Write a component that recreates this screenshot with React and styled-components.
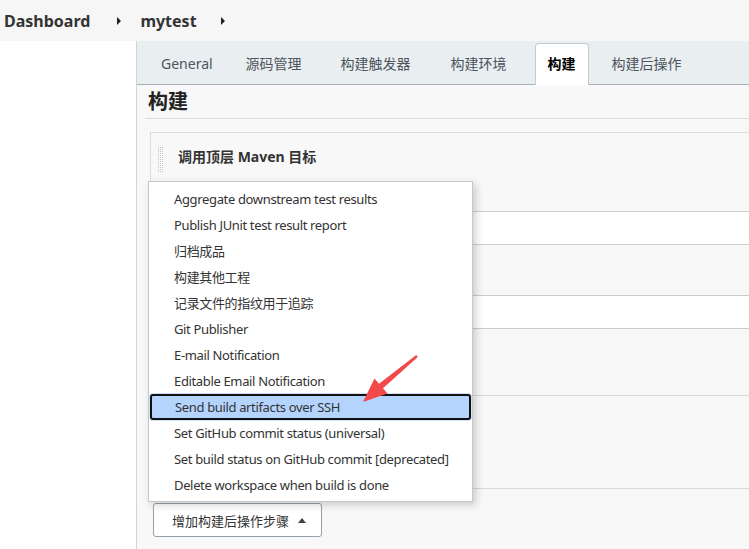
import React from 'react';
import styled, { createGlobalStyle, css } from 'styled-components';

const GlobalStyle = createGlobalStyle`
  html, body {
    margin: 0;
    padding: 0;
    background: #fff;
    font-family: "Noto Sans", "Noto Sans CJK SC", sans-serif;
    color: #333;
  }
`;

const Page = styled.div`
  position: relative;
  width: 749px;
  height: 549px;
  overflow: hidden;
  display: flex;
  flex-direction: column;
`;

const TopBar = styled.div`
  height: 41px;
  flex: none;
  background: #f6f6f6;
  display: flex;
  align-items: center;
  padding-left: 4px;
`;

const Crumb = styled.div`
  font-size: 16px;
  font-weight: bold;
  color: #333;
`;

const CrumbArrow = styled.span`
  width: 0;
  height: 0;
  border-top: 4px solid transparent;
  border-bottom: 4px solid transparent;
  border-left: 4px solid #222;
  margin: 0 19px 0 ${(props) => props.before}px;
`;

const Body = styled.div`
  flex: 1;
  display: flex;
  min-height: 0;
`;

const Sidebar = styled.div`
  width: 136px;
  flex: none;
  background: #fff;
`;

const Main = styled.div`
  flex: 1;
  position: relative;
  background: #f8f8f8;
  border-left: 1px solid #d4d4d4;
  display: flex;
  flex-direction: column;
`;

const TabBar = styled.div`
  height: 44px;
  flex: none;
  background: #e9eef1;
  border-bottom: 1px solid #a7b0b7;
  display: flex;
  align-items: flex-end;
  padding-left: 11px;
  box-sizing: border-box;
`;

const Tab = styled.div`
  height: 42px;
  box-sizing: border-box;
  padding: 0 12px 3px;
  margin-right: ${(props) => props.gap}px;
  display: flex;
  align-items: center;
  font-size: 14px;
  color: #4d545d;
  margin-bottom: -1px;
  border: 1px solid transparent;
  border-bottom: none;
  ${(props) =>
    props.active &&
    css`
      background: #fff;
      border-color: #c3c9ce;
      border-radius: 4px 4px 0 0;
      color: #000;
      font-weight: bold;
    `}
`;

const Content = styled.div`
  flex: 1;
  padding-left: 8px;
  display: flex;
  flex-direction: column;
`;

const Heading = styled.h2`
  margin: 0;
  height: 34px;
  box-sizing: border-box;
  border-bottom: 1px solid #ddd;
  padding-left: 3px;
  font-size: 20px;
  font-weight: bold;
  color: #222;
  line-height: 34px;
`;

const Section = styled.div`
  margin: 13px 0 0 5px;
  border-top: 1px solid #dcdcdc;
  border-left: 1px solid #dcdcdc;
  border-bottom: 1px solid #d8d8d8;
  display: flex;
  flex-direction: column;
`;

const SectionHeader = styled.div`
  height: 78px;
  display: flex;
  align-items: flex-start;
  padding: 13px 0 0 6px;
  box-sizing: border-box;
`;

const DragHandle = styled.div`
  width: 7px;
  height: 26px;
  margin-right: 14px;
  background:
    linear-gradient(90deg, #f8f8f8 1px, transparent 1px) 0 0 / 2px 2px,
    linear-gradient(#f8f8f8 1px, #c4c4c4 1px) 0 0 / 2px 2px;
`;

const SectionTitle = styled.div`
  font-size: 14px;
  font-weight: bold;
  color: #333;
`;

const FieldRow = styled.div`
  height: 32px;
  background: #fff;
  border-top: 1px solid #ccc;
  border-bottom: 1px solid #ccc;
  margin-left: 10px;
`;

const Spacer = styled.div`
  height: ${(props) => props.h}px;
`;

const Block = styled.div`
  height: 92px;
  border-bottom: 1px solid #d8d8d8;
  margin-left: 5px;
`;

const AddButton = styled.button`
  margin: 14px 0 0 8px;
  width: 169px;
  height: 34px;
  background: #fff;
  border: 1px solid #94a1ab;
  border-radius: 3px;
  font-family: inherit;
  font-size: 13px;
  color: #333;
  display: flex;
  align-items: center;
  padding: 0 0 0 18px;
  box-sizing: border-box;
`;

const Caret = styled.span`
  width: 0;
  height: 0;
  border-left: 4px solid transparent;
  border-right: 4px solid transparent;
  border-bottom: 5px solid #444;
  margin-left: 9px;
`;

const Menu = styled.ul`
  position: absolute;
  left: 11px;
  top: 140px;
  width: 325px;
  margin: 0;
  padding: 4px 0 3px;
  list-style: none;
  background: #fff;
  border: 1px solid #c8c8c8;
  box-shadow: 3px 3px 8px rgba(0, 0, 0, 0.18);
  box-sizing: border-box;
`;

const MenuItem = styled.li`
  height: 26px;
  line-height: 26px;
  padding-left: 25px;
  font-size: 13px;
  letter-spacing: -0.35px;
  color: #333;
  white-space: nowrap;
  box-sizing: border-box;
  ${(props) =>
    props.selected &&
    css`
      margin: 0 1px;
      padding-left: 23px;
      line-height: 22px;
      background: #b4d4fd;
      border: 2px solid #111;
      border-radius: 3px;
      box-shadow: 0 0 0 1px #cfe2fb;
    `}
`;

const Arrow = styled.svg`
  position: absolute;
  left: 360px;
  top: 352px;
  pointer-events: none;
`;

const tabs = [
  { label: 'General', gap: 7 },
  { label: '源码管理', gap: 13 },
  { label: '构建触发器', gap: 14 },
  { label: '构建环境', gap: 15 },
  { label: '构建', gap: 10, active: true },
  { label: '构建后操作', gap: 0 },
];

const menuItems = [
  'Aggregate downstream test results',
  'Publish JUnit test result report',
  '归档成品',
  '构建其他工程',
  '记录文件的指纹用于追踪',
  'Git Publisher',
  'E-mail Notification',
  'Editable Email Notification',
  'Send build artifacts over SSH',
  'Set GitHub commit status (universal)',
  'Set build status on GitHub commit [deprecated]',
  'Delete workspace when build is done',
];

const App = () => {
  return (
    <Page>
      <GlobalStyle />
      <TopBar>
        <Crumb>Dashboard</Crumb>
        <CrumbArrow before={27} />
        <Crumb>mytest</Crumb>
        <CrumbArrow before={24} />
      </TopBar>
      <Body>
        <Sidebar />
        <Main>
          <TabBar>
            {tabs.map((tab) => (
              <Tab key={tab.label} gap={tab.gap} active={tab.active}>
                {tab.label}
              </Tab>
            ))}
          </TabBar>
          <Content>
            <Heading>构建</Heading>
            <Section>
              <SectionHeader>
                <DragHandle />
                <SectionTitle>调用顶层 Maven 目标</SectionTitle>
              </SectionHeader>
              <FieldRow />
              <Spacer h={50} />
              <FieldRow />
              <Spacer h={66} />
            </Section>
            <Block />
            <AddButton>
              增加构建后操作步骤
              <Caret />
            </AddButton>
          </Content>
          <Menu>
            {menuItems.map((item) => (
              <MenuItem key={item} selected={item.startsWith('Send build')}>
                {item}
              </MenuItem>
            ))}
          </Menu>
        </Main>
        {/* red annotation arrow */}
        <Arrow width="64" height="54" viewBox="360 352 64 54">
          <polygon
            points="416.2,355 379,383.7 374.5,378.4 363,402 387.5,393.6 383,388.3 417.8,357"
            fill="#f24a4a"
          />
        </Arrow>
      </Body>
    </Page>
  );
};

export default App;
